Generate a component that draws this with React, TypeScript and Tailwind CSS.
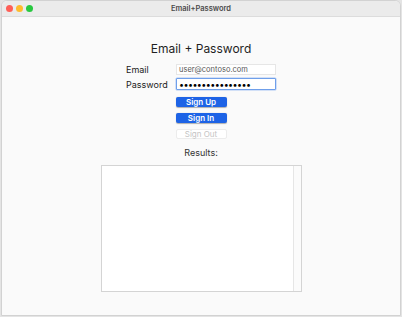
import React from "react";

const font = { fontFamily: '"Helvetica Neue", Inter, "Liberation Sans", Arial, sans-serif' };

const Light = ({ color }: { color: string }) => (
  <span className={`block w-[7px] h-[7px] rounded-full ${color}`} />
);

export default function App() {
  return (
    <div className="w-[402px] h-[317px] bg-[#e4e4e4] overflow-hidden" style={font}>
      <div className="ml-[1px] w-[400px] h-[316px] rounded-t-[6px] bg-[#fafafa] border border-[#d2d2d2] flex flex-col overflow-hidden">
        <div className="h-[16px] shrink-0 bg-[#ebebeb] border-b border-[#dcdcdc] flex items-center relative">
          <div className="flex gap-[3px] pl-[4px]">
            <Light color="bg-[#fe5f57]" />
            <Light color="bg-[#febc2e]" />
            <Light color="bg-[#28c840]" />
          </div>
          <div className="absolute inset-0 flex items-center justify-center text-[7.5px] font-semibold text-[#4a4a4a]">
            Email+Password
          </div>
        </div>
        <div className="flex flex-col items-center">
          <div className="mt-[24px] text-[12px] text-[#1f1f1f] leading-[16px]">Email + Password</div>
          <div className="mt-[7px] w-[150px] grid grid-cols-[50px_100px] gap-y-[3px] items-center text-[9px] text-[#222]">
            <span className="leading-[11px]">Email</span>
            <div className="h-[11px] bg-white border border-[#e6e6e6] flex items-center px-[2px] text-[7.5px] text-[#555]">
              user@contoso.com
            </div>
            <span className="leading-[11px]">Password</span>
            <div className="h-[12px] bg-white border-[1.5px] border-[#6f9fea] rounded-[1px] flex items-center px-[2px] text-[9px] text-black tracking-[-0.6px] leading-none shadow-[0_0_0_0.5px_#a9c6f3]">
              ••••••••••••••••
            </div>
          </div>
          <div className="mt-[7px] flex flex-col gap-[6px] text-[8px] font-semibold">
            <div className="w-[51px] h-[10px] rounded-[2px] bg-[#1d63e6] text-white flex items-center justify-center shadow-[0_0.5px_1px_rgba(0,0,0,0.3)]">
              Sign Up
            </div>
            <div className="w-[51px] h-[10px] rounded-[2px] bg-[#1d63e6] text-white flex items-center justify-center shadow-[0_0.5px_1px_rgba(0,0,0,0.3)]">
              Sign In
            </div>
            <div className="w-[51px] h-[10px] rounded-[2px] bg-white border border-[#ececec] text-[#c4c4c4] font-normal flex items-center justify-center">
              Sign Out
            </div>
          </div>
          <div className="mt-[8px] text-[9px] text-[#333] leading-[11px]">Results:</div>
          <div className="mt-[7px] w-[201px] h-[127px] bg-white border border-[#d4d4d4] flex justify-end">
            <div className="w-[8px] h-full border-l border-[#e6e6e6] bg-[#fbfbfb]" />
          </div>
        </div>
      </div>
    </div>
  );
}
